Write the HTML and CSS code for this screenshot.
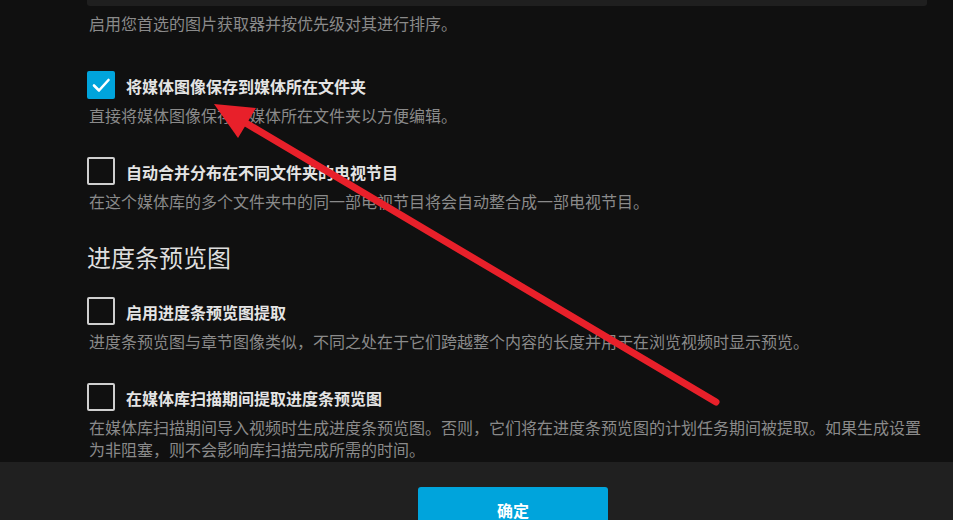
FILE: index.html
```html
<!DOCTYPE html>
<html lang="zh-CN">
<head>
<meta charset="utf-8">
<link rel="stylesheet" href="styles.css">
</head>
<body>
<div class="page">
  <div class="content">
    <div class="select-bottom"></div>
    <div class="desc first">启用您首选的图片获取器并按优先级对其进行排序。</div>

    <div class="field f1">
      <label class="row">
        <span class="box checked">
          <svg viewBox="0 0 28 28" width="28" height="28"><path d="M7 14.5 L12 19.5 L21.5 9" fill="none" stroke="#fff" stroke-width="2.6" stroke-linecap="round" stroke-linejoin="round"/></svg>
        </span>
        <span class="label">将媒体图像保存到媒体所在文件夹</span>
      </label>
      <div class="desc">直接将媒体图像保存到媒体所在文件夹以方便编辑。</div>
    </div>

    <div class="field f2">
      <label class="row">
        <span class="box"></span>
        <span class="label">自动合并分布在不同文件夹的电视节目</span>
      </label>
      <div class="desc">在这个媒体库的多个文件夹中的同一部电视节目将会自动整合成一部电视节目。</div>
    </div>

    <h2 class="heading">进度条预览图</h2>

    <div class="field f3">
      <label class="row">
        <span class="box"></span>
        <span class="label">启用进度条预览图提取</span>
      </label>
      <div class="desc">进度条预览图与章节图像类似，不同之处在于它们跨越整个内容的长度并用于在浏览视频时显示预览。</div>
    </div>

    <div class="field f4">
      <label class="row">
        <span class="box"></span>
        <span class="label">在媒体库扫描期间提取进度条预览图</span>
      </label>
      <div class="desc">在媒体库扫描期间导入视频时生成进度条预览图。否则，它们将在进度条预览图的计划任务期间被提取。如果生成设置为非阻塞，则不会影响库扫描完成所需的时间。</div>
    </div>
  </div>

  <div class="footer">
    <button class="ok">确定</button>
  </div>

  <svg class="arrow" width="953" height="520" viewBox="0 0 953 520">
    <line x1="716" y1="402" x2="244" y2="122" stroke="#e8202a" stroke-width="7" stroke-linecap="round"/>
    <polygon points="214,104 256,108 238,138" fill="#e8202a"/>
  </svg>
</div>
</body>
</html>
```

FILE: styles.css
```css
* { box-sizing: border-box; }
html, body {
  margin: 0;
  padding: 0;
  background: #101010;
  overflow: hidden;
}
body {
  font-family: "Noto Sans CJK SC", "Noto Sans", sans-serif;
  color: #e0e0e0;
  width: 953px;
  height: 520px;
}
.page {
  position: relative;
  width: 953px;
  height: 520px;
  display: flex;
  flex-direction: column;
}
.content {
  padding-left: 87px;
  width: 927px;
  display: flex;
  flex-direction: column;
}
.select-bottom {
  height: 6px;
  background: #1f1f1f;
  border-radius: 0 0 3px 3px;
}
.desc {
  font-size: 16px;
  line-height: 22px;
  color: #8a8a8a;
  max-width: 840px;
  padding-left: 2px;
  margin-top: 5px;
}
.desc.first { margin-top: 6px; }
.field { display: flex; flex-direction: column; }
.f1 { margin-top: 37px; }
.f2 { margin-top: 31px; }
.f3 { margin-top: 24px; }
.f4 { margin-top: 31px; }
.row {
  display: flex;
  align-items: center;
  gap: 11px;
  height: 28px;
}
.box {
  width: 28px;
  height: 28px;
  border: 2px solid #cfcfcf;
  border-radius: 2px;
  flex: none;
  display: flex;
}
.box.checked {
  background: #00a4dc;
  border-color: #00a4dc;
}
.box.checked svg { margin: -2px; }
.label {
  font-size: 16px;
  font-weight: 700;
  color: #e4e4e4;
  line-height: 22px;
  padding-top: 1px;
}
.heading {
  margin: 29px 0 0 0;
  font-size: 24px;
  font-weight: 400;
  line-height: 32px;
  color: #dedede;
}
.footer {
  margin-top: auto;
  height: 58px;
  background: #202020;
  display: flex;
  align-items: flex-end;
  padding-left: 418px;
}
.ok {
  width: 190px;
  height: 33px;
  flex: none;
  border: none;
  border-radius: 3px 3px 0 0;
  background: #00a4dc;
  color: #fff;
  font-family: "Noto Sans CJK SC", sans-serif;
  font-size: 16px;
  font-weight: 700;
  line-height: 17px;
  padding: 15px 0 0 0;
  display: flex;
  justify-content: center;
  align-items: flex-start;
}
.arrow {
  position: absolute;
  left: 0;
  top: 0;
  pointer-events: none;
}
```
